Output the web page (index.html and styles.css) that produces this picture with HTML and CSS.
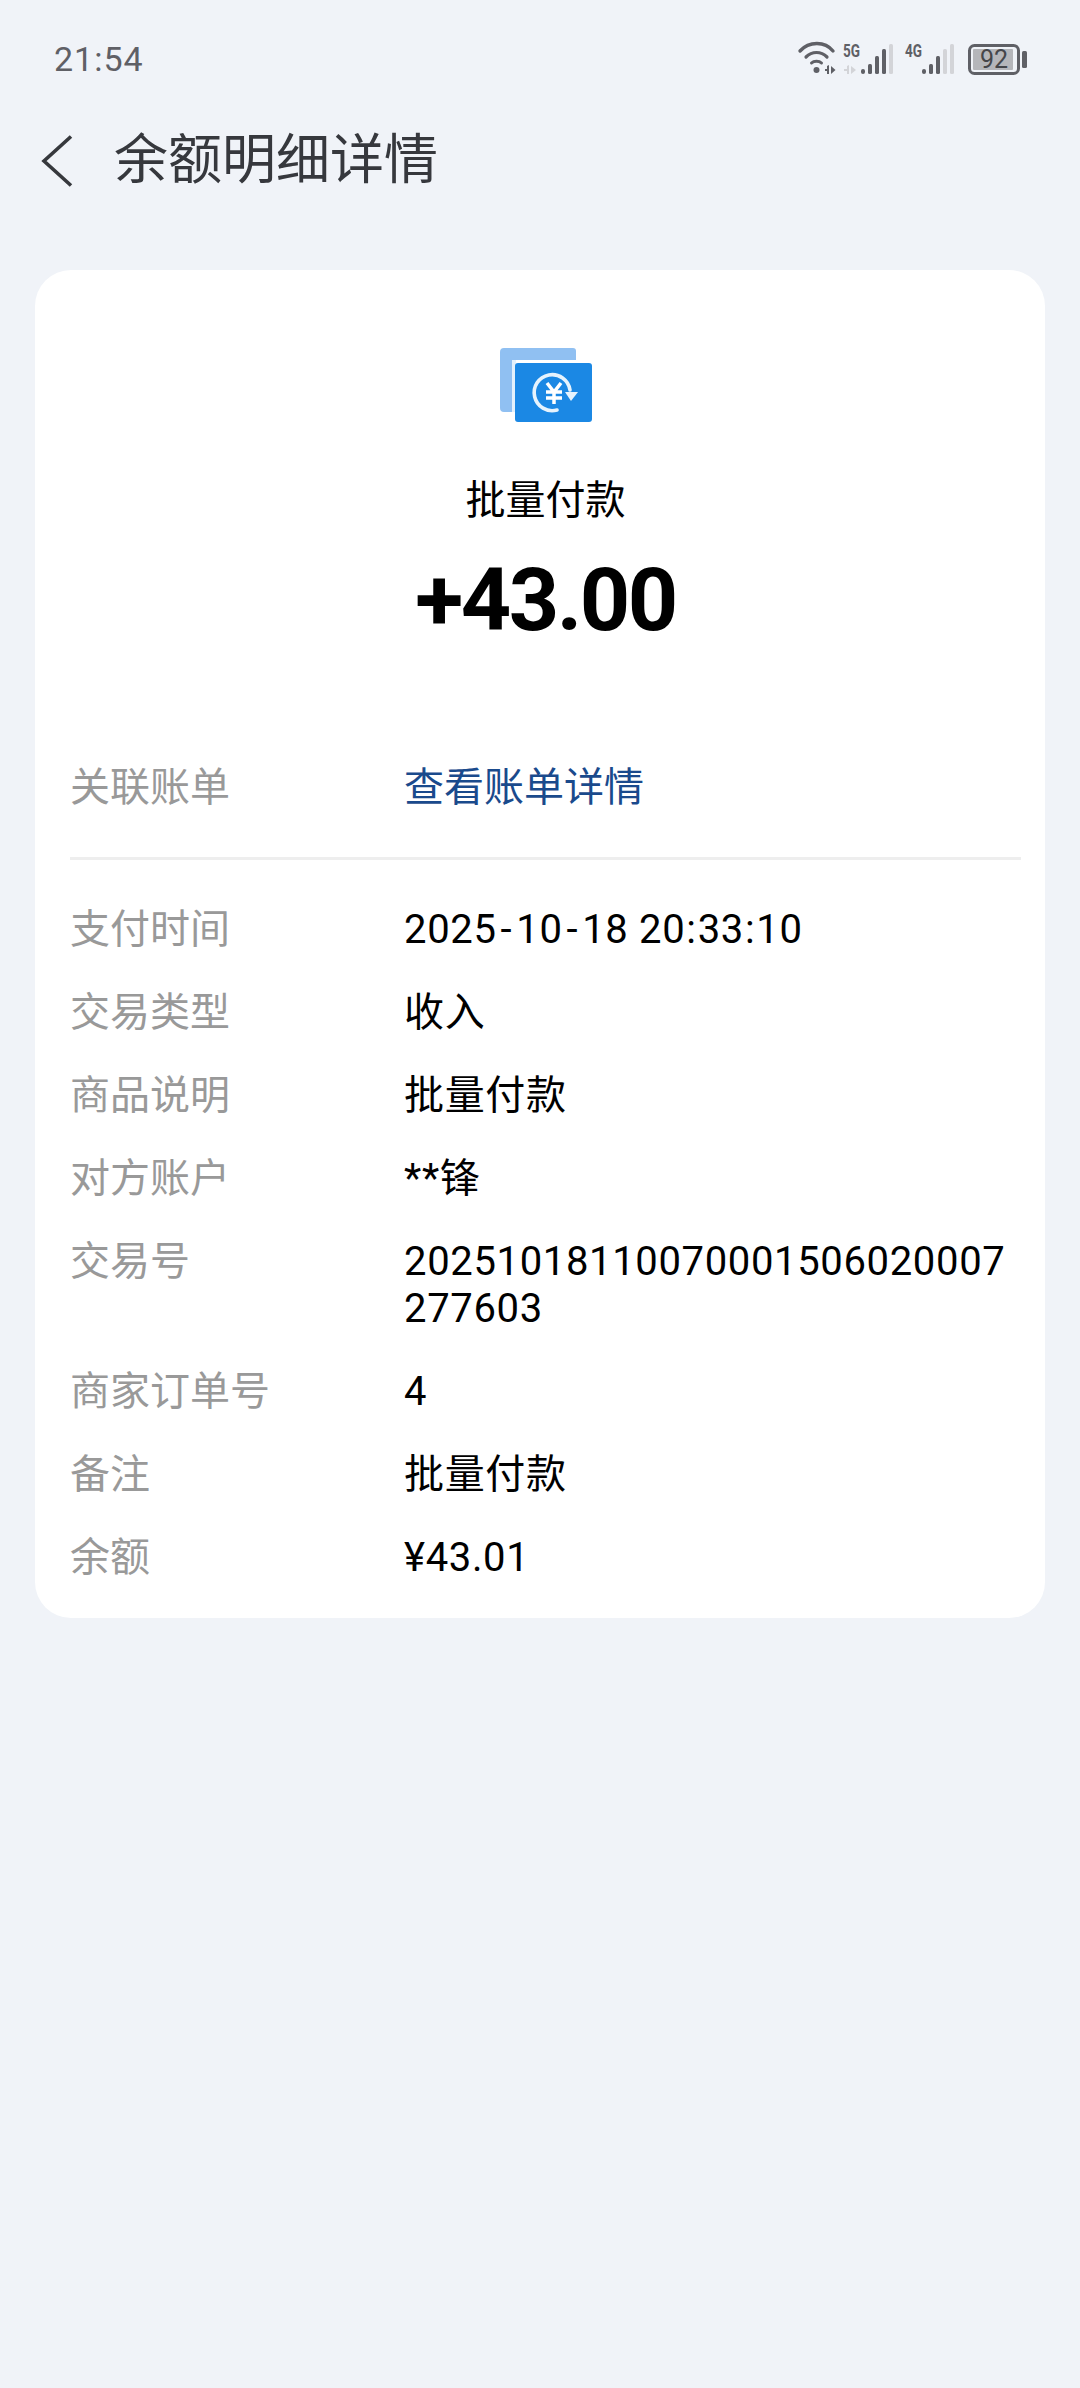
FILE: index.html
```html
<!DOCTYPE html>
<html lang="zh-CN">
<head>
<meta charset="utf-8">
<title>余额明细详情</title>
<link rel="stylesheet" href="styles.css">
</head>
<body>
<div class="status">
  <span class="time">21:54</span>
  <svg class="status-icons" width="230" height="36" viewBox="0 0 230 36">
    <g fill="none" stroke="#5f6066" stroke-linecap="round">
      <path d="M1 11C10 1 26 1 34 11" stroke-width="3.400"/>
      <path d="M7 17C13 11 22 11 28 17" stroke-width="3.200"/>
      <path d="M12.500 23C15 20.500 20 20.500 22.500 23" stroke-width="3"/>
    </g>
    <circle cx="17.500" cy="30" r="3" fill="#5f6066"/>
    <path d="M26 29h2v-3l2-1v9h-2v-3h-2zM32 26l4.500 4-4.500 4z" fill="#5f6066"/>
    <g fill="#d3d4d8">
      <path d="M45 29h3v-3l2-1v9h-2v-3h-3zM52 26l5 4-5 4z"/>
      <rect x="90" y="4" width="4" height="30" rx="1.500"/>
      <rect x="144" y="9" width="4" height="25" rx="1.500"/>
      <rect x="151" y="4" width="4" height="30" rx="1.500"/>
    </g>
    <g fill="#5f6066">
      <rect x="62" y="29" width="4" height="5" rx="2"/>
      <rect x="69" y="24" width="4" height="10" rx="1.500"/>
      <rect x="76" y="16" width="4" height="18" rx="1.500"/>
      <rect x="83" y="9" width="4" height="25" rx="1.500"/>
      <rect x="123" y="29" width="4" height="5" rx="2"/>
      <rect x="130" y="24" width="4" height="10" rx="1.500"/>
      <rect x="137" y="16" width="4" height="18" rx="1.500"/>
    </g>
    <rect x="170.500" y="5.500" width="49" height="28" rx="5" fill="none" stroke="#5f6066" stroke-width="3"/>
    <rect x="174" y="9" width="40" height="21" rx="1" fill="#b5b6ba"/>
    <rect x="223" y="11" width="5" height="17" rx="1.500" fill="#5f6066"/>
    <text x="44" y="17" class="net" textLength="17" lengthAdjust="spacingAndGlyphs">5G</text>
    <text x="106" y="17" class="net" textLength="17" lengthAdjust="spacingAndGlyphs">4G</text>
    <text x="195" y="28" class="batt" text-anchor="middle">92</text>
  </svg>
</div>
<header class="nav">
  <svg class="back" width="32" height="52" viewBox="0 0 32 52"><path d="M30 1.500L3 26l27 24.500" fill="none" stroke="#36383d" stroke-width="3.600"/></svg>
  <h1 class="title">余额明细详情</h1>
</header>
<main class="card">
  <div class="hero">
    <svg class="hero-icon" width="92" height="74" viewBox="0 0 92 74">
      <path d="M4 0h69a3 3 0 0 1 3 3v9H16a4 4 0 0 0-4 4v48H4a4 4 0 0 1-4-4V4a4 4 0 0 1 4-4z" fill="#90c0f2"/>
      <rect x="12" y="12" width="4" height="52" fill="#e4f1fc"/>
      <rect x="15" y="15" width="77" height="59" rx="3" fill="#1b88e4"/>
      <path d="M70 42A18 18 0 1 0 57 62" fill="none" stroke="#e6f3fd" stroke-width="3.600" stroke-linecap="round"/>
      <path d="M65 44h13l-7 9z" fill="#e6f3fd"/>
      <path d="M47 35l7 9 7-9M46 44h16M46 50h16M54 44v12" fill="none" stroke="#fff" stroke-width="3.500"/>
    </svg>
    <div class="hero-name">批量付款</div>
    <div class="hero-amount">+43.00</div>
  </div>
  <div class="row row-link">
    <span class="label">关联账单</span>
    <span class="value link">查看账单详情</span>
  </div>
  <hr class="divider">
  <div class="rows">
    <div class="row"><span class="label">支付时间</span><span class="value">2025<span class="hy">-</span>10<span class="hy">-</span>18 20<span class="co">:</span>33<span class="co">:</span>10</span></div>
    <div class="row"><span class="label">交易类型</span><span class="value">收入</span></div>
    <div class="row"><span class="label">商品说明</span><span class="value">批量付款</span></div>
    <div class="row"><span class="label">对方账户</span><span class="value">**锋</span></div>
    <div class="row"><span class="label">交易号</span><span class="value">20251018110070001506020007277603</span></div>
    <div class="row"><span class="label">商家订单号</span><span class="value">4</span></div>
    <div class="row"><span class="label">备注</span><span class="value">批量付款</span></div>
    <div class="row"><span class="label">余额</span><span class="value">¥43.01</span></div>
  </div>
</main>
</body>
</html>
```
FILE: styles.css
```css
* { box-sizing: border-box; }
html, body { margin: 0; padding: 0; }
body {
  width: 1080px;
  height: 2388px;
  background: #f0f3f8;
  font-family: Roboto, "Noto Sans CJK SC", sans-serif;
  overflow: hidden;
}
.status {
  height: 118px;
  padding: 36px 51px 0 54px;
  display: flex;
  justify-content: space-between;
  align-items: flex-start;
}
.time { font-size: 34px; line-height: 46px; color: #5f6066; letter-spacing: 1px; }
.status-icons { overflow: visible; margin-top: 4px; }
.net { font: 700 18px Roboto, sans-serif; fill: #5f6066; }
.batt { font: 400 25px Roboto, sans-serif; fill: #45464a; }
.nav {
  height: 86px;
  display: flex;
  align-items: center;
  padding-left: 41px;
  gap: 41px;
}
.title { margin: 0; font-size: 54px; font-weight: 400; line-height: 86px; color: #36383d; }
.card {
  margin: 66px 35px 0;
  height: 1348px;
  background: #fff;
  border-radius: 36px;
  padding: 78px 24px 0 35px;
}
.hero { display: flex; flex-direction: column; align-items: center; }
.hero-icon { display: block; }
.hero-name { margin-top: 51px; font-size: 40px; line-height: 56px; color: #000; }
.hero-amount { margin-top: 18px; font-size: 88px; font-weight: 700; line-height: 106px; letter-spacing: -2.500px; color: #000; }
.row { display: flex; font-size: 40px; line-height: 47px; }
.row-link { margin-top: 111px; }
.rows { display: flex; flex-direction: column; gap: 36px; }
.label { flex: 0 0 334px; color: #999; }
.value { flex: 1; color: #000; letter-spacing: 0.65px; word-break: break-all; }
.hy { padding: 0 4px; }
.co { padding: 0 1px; }
.link { color: #1a4a8c; letter-spacing: 0; }
.divider { margin: 46px 0; border: 0; height: 3px; background: #eeeeee; }
```
